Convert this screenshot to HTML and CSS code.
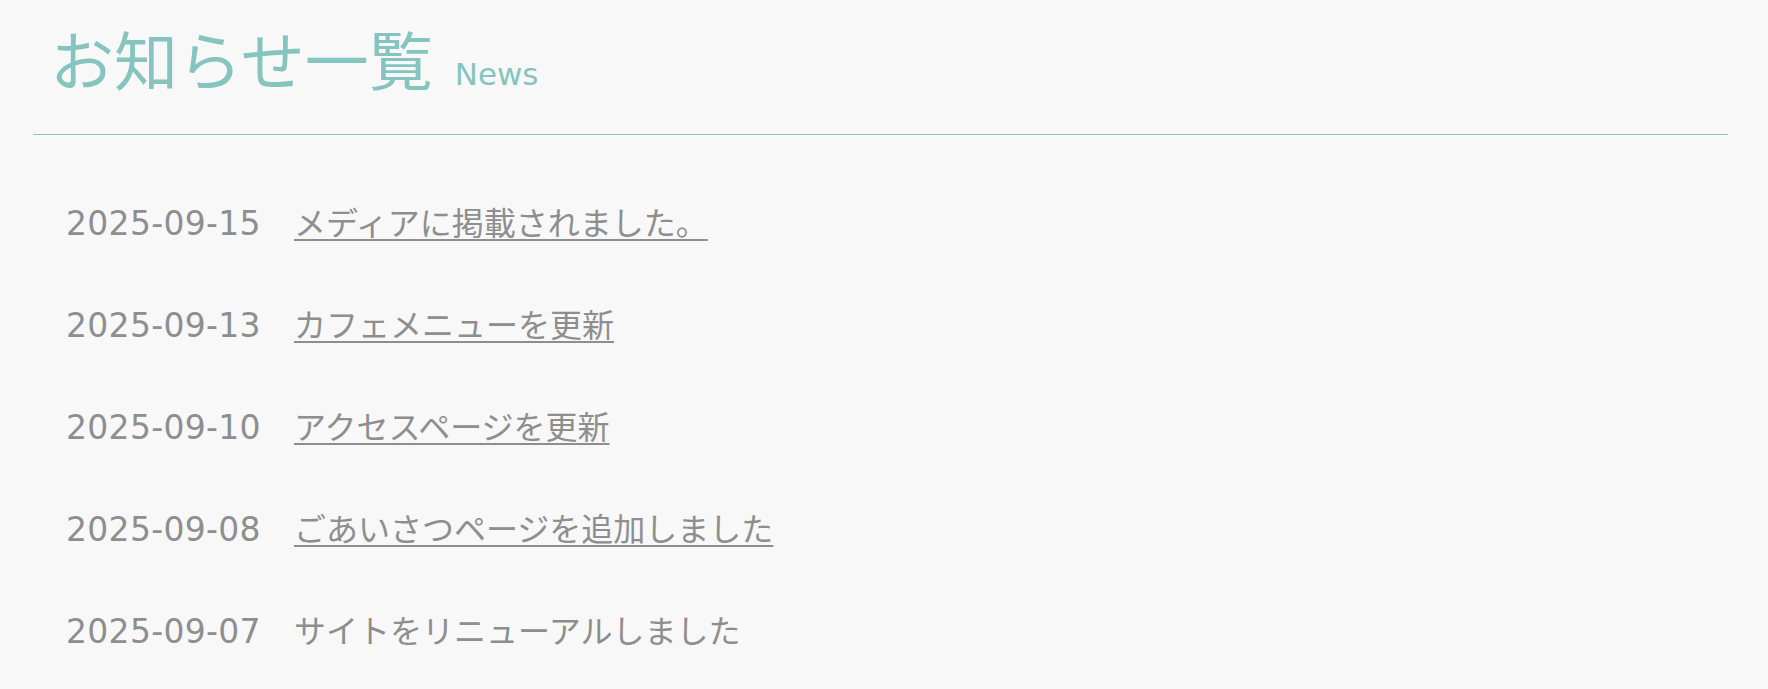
FILE: index.html
```html
<!DOCTYPE html>
<html lang="ja">
<head>
<meta charset="utf-8">
<title>お知らせ一覧</title>
<link rel="stylesheet" href="styles.css">
</head>
<body>
<main class="news-page">
  <header class="page-header">
    <h1 class="page-title"><span class="title-ja">お知らせ一覧</span><span class="title-en">News</span></h1>
  </header>
  <ul class="news-list">
    <li class="news-item"><time class="news-date">2025-09-15</time><a class="news-link" href="#">メディアに掲載されました。</a></li>
    <li class="news-item"><time class="news-date">2025-09-13</time><a class="news-link" href="#">カフェメニューを更新</a></li>
    <li class="news-item"><time class="news-date">2025-09-10</time><a class="news-link" href="#">アクセスページを更新</a></li>
    <li class="news-item"><time class="news-date">2025-09-08</time><a class="news-link" href="#">ごあいさつページを追加しました</a></li>
    <li class="news-item"><time class="news-date">2025-09-07</time><span class="news-text">サイトをリニューアルしました</span></li>
  </ul>
</main>
</body>
</html>
```
FILE: styles.css
```css
html, body {
  margin: 0;
  padding: 0;
  background: #f8f8f8;
}

body {
  font-family: "DejaVu Sans", "Noto Sans CJK JP", sans-serif;
  color: #8e8e8e;
}

.news-page {
  margin: 0 40px 0 33px;
}

.page-header {
  padding: 25px 0 44px 17px;
  border-bottom: 1px solid #88c3bc;
}

.page-title {
  display: flex;
  align-items: baseline;
  gap: 22px;
  margin: 0;
  font-weight: normal;
  color: #86c4c0;
}

.title-ja {
  font-family: "Noto Sans CJK JP", sans-serif;
  font-size: 64px;
  line-height: 64px;
}

.title-en {
  font-family: "DejaVu Sans", sans-serif;
  font-size: 31px;
  line-height: 1;
}

.news-list {
  list-style: none;
  margin: 0;
  padding: 36px 0 0 33px;
}

.news-item {
  display: grid;
  grid-template-columns: 195px auto;
  justify-content: start;
  align-items: baseline;
  column-gap: 33px;
  padding: 30px 0 29px;
  line-height: 40px;
}

.news-date {
  font-family: "DejaVu Sans", sans-serif;
  font-size: 33px;
  letter-spacing: 0.3px;
}

.news-link,
.news-text {
  font-family: "Noto Sans CJK JP", sans-serif;
  font-size: 32px;
  color: #8e8e8e;
}

.news-link {
  text-decoration: underline;
  text-decoration-thickness: 2px;
  text-underline-offset: 4px;
}
```
